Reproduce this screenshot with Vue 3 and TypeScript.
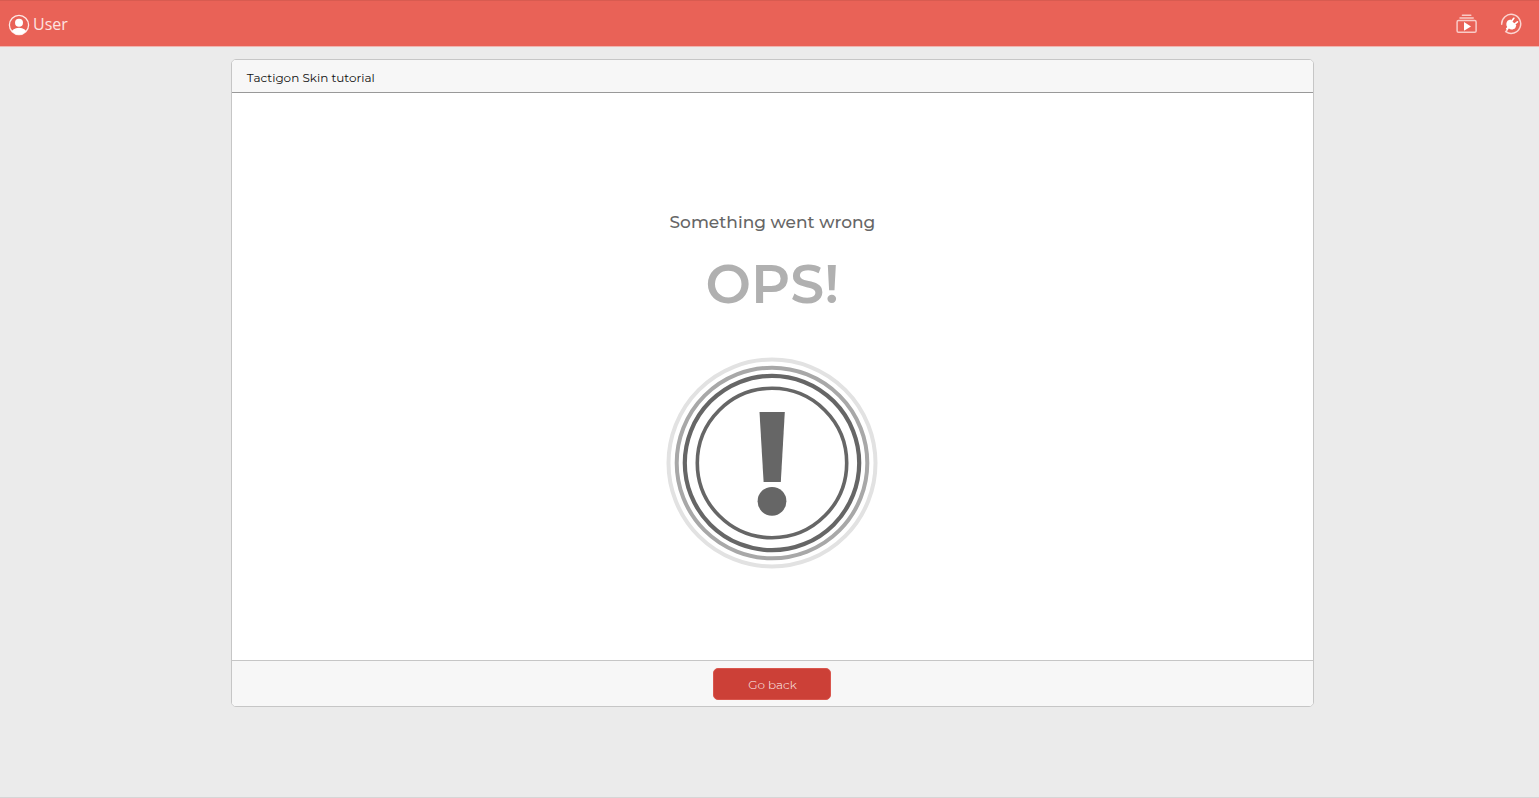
<script setup lang="ts">
interface Ring {
  radius: number
  width: number
  color: string
}

const title: string = 'Tactigon Skin tutorial'

const rings: Ring[] = [
  { radius: 103.5, width: 4, color: '#e2e2e2' },
  { radius: 95.3, width: 4, color: '#a8a8a8' },
  { radius: 87.2, width: 4.2, color: '#666666' },
  { radius: 74.7, width: 3.6, color: '#666666' },
]

function goBack(): void {
  window.history.back()
}
</script>

<template>
  <div class="page">
    <header class="topbar">
      <a class="user" href="#user">
        <svg class="user-icon" viewBox="0 0 22 22" aria-hidden="true">
          <defs>
            <clipPath id="avatar"><circle cx="11" cy="11" r="9.5" /></clipPath>
          </defs>
          <circle cx="11" cy="11" r="9.6" fill="none" stroke="#fde9e7" stroke-width="1.3" />
          <circle cx="11" cy="8.7" r="4" fill="#fff" />
          <ellipse cx="11" cy="19.3" rx="8" ry="5.5" fill="#fff" clip-path="url(#avatar)" />
        </svg>
        <span>User</span>
      </a>
      <nav class="tools">
        <a href="#tutorials" aria-label="Tutorials">
          <svg class="tool-icon" viewBox="0 0 22 22">
            <g fill="none" stroke="#f9cbc7" stroke-width="1.5" stroke-linecap="round">
              <path d="M7.4 2.3h8.4M5 5h13.2" />
              <rect x="2.1" y="7.5" width="19" height="11.8" rx="1.4" />
            </g>
            <path d="M9 9v8.8l7-4.4z" fill="#fff" />
          </svg>
        </a>
        <a href="#connection" aria-label="Connection">
          <svg class="tool-icon" viewBox="0 0 22 22">
            <path
              d="M1.7 11.2A9.5 9.5 0 1 1 5.8 18.7L7.5 16.3"
              fill="none"
              stroke="#fbd5d1"
              stroke-width="1.5"
              stroke-linecap="round"
            />
            <path
              d="M7.8 7.4l2.6-1 5.9 5.9-1 2.6c-1.8 1.8-4.5 1.9-6.4.6l-1.7 1.6-1.4-1.4 1.4-1.8c-1.4-2-1.1-4.7.6-6.5z"
              fill="#fff"
            />
            <path d="M11.6 8.2l2.2-2.9M14.6 11.2l2.8-2.3" fill="none" stroke="#fff" stroke-width="1.7" stroke-linecap="round" />
          </svg>
        </a>
      </nav>
    </header>

    <main class="content">
      <section class="card">
        <h1 class="card-header">{{ title }}</h1>
        <div class="card-body">
          <p class="message">Something went wrong</p>
          <p class="ops">OPS!</p>
          <svg class="warning" viewBox="0 0 212 212" role="img" aria-label="Error">
            <circle
              v-for="ring in rings"
              :key="ring.radius"
              cx="106"
              cy="106"
              :r="ring.radius"
              :stroke="ring.color"
              :stroke-width="ring.width"
              fill="none"
            />
            <path d="M93.5 55h25.3l-4 70h-17.2z" fill="#666" />
            <circle cx="106" cy="144.3" r="14.4" fill="#666" />
          </svg>
        </div>
        <footer class="card-footer">
          <button type="button" class="back" @click="goBack">Go back</button>
        </footer>
      </section>
    </main>
  </div>
</template>

<style>
body {
  margin: 0;
  background: #ebebeb;
}
</style>

<style scoped>
.page {
  box-sizing: border-box;
  display: flex;
  flex-direction: column;
  min-height: 100vh;
  border-bottom: 1px solid #d6d6d6;
  background: #ebebeb;
  font-family: Montserrat, Inter, sans-serif;
}

.topbar {
  box-sizing: border-box;
  display: flex;
  align-items: center;
  justify-content: space-between;
  height: 47px;
  padding: 0 17px 0 8px;
  border-top: 1px solid #d85b50;
  border-bottom: 1px solid #f0b5b0;
  background: #e96257;
}

.user {
  display: flex;
  align-items: center;
  gap: 3px;
  padding-top: 3px;
  color: #fde4e1;
  font-family: "Open Sans", "Noto Sans", sans-serif;
  font-size: 16px;
  line-height: 20px;
  text-decoration: none;
}

.user span {
  padding-bottom: 2px;
}

.user-icon,
.tool-icon {
  display: block;
  width: 22px;
  height: 22px;
}

.tools {
  display: flex;
  gap: 23px;
}

.content {
  padding: 12px 225px 24px 15%;
}

.card {
  overflow: hidden;
  border: 1px solid #c6c6c6;
  border-radius: 5px;
  background: #fff;
}

.card-header {
  margin: 0;
  padding: 8px 15px 4px;
  border-bottom: 1px solid #999;
  background: #f7f7f7;
  color: #111;
  font-size: 12px;
  font-weight: 400;
  line-height: 20px;
}

.card-body {
  display: flex;
  flex-direction: column;
  align-items: center;
  padding: 117px 16px 91px;
}

.message {
  margin: 0;
  color: #666;
  font-size: 17px;
  font-weight: 500;
  line-height: 24px;
}

.ops {
  margin: 17px 0 40px;
  color: #b0b0b0;
  font-size: 54px;
  font-weight: 600;
  line-height: 66px;
}

.warning {
  display: block;
  width: 212px;
  height: 212px;
}

.card-footer {
  display: flex;
  justify-content: center;
  padding: 7px 16px 6px;
  border-top: 1px solid #c6c6c6;
  background: #f7f7f7;
}

.back {
  width: 118px;
  height: 32px;
  padding: 2px 0 0;
  border: 1px solid #d9564d;
  border-radius: 5px;
  background: #cc4037;
  color: #fdf0ef;
  font: 300 12px/20px Montserrat, Inter, sans-serif;
  cursor: pointer;
}
</style>
